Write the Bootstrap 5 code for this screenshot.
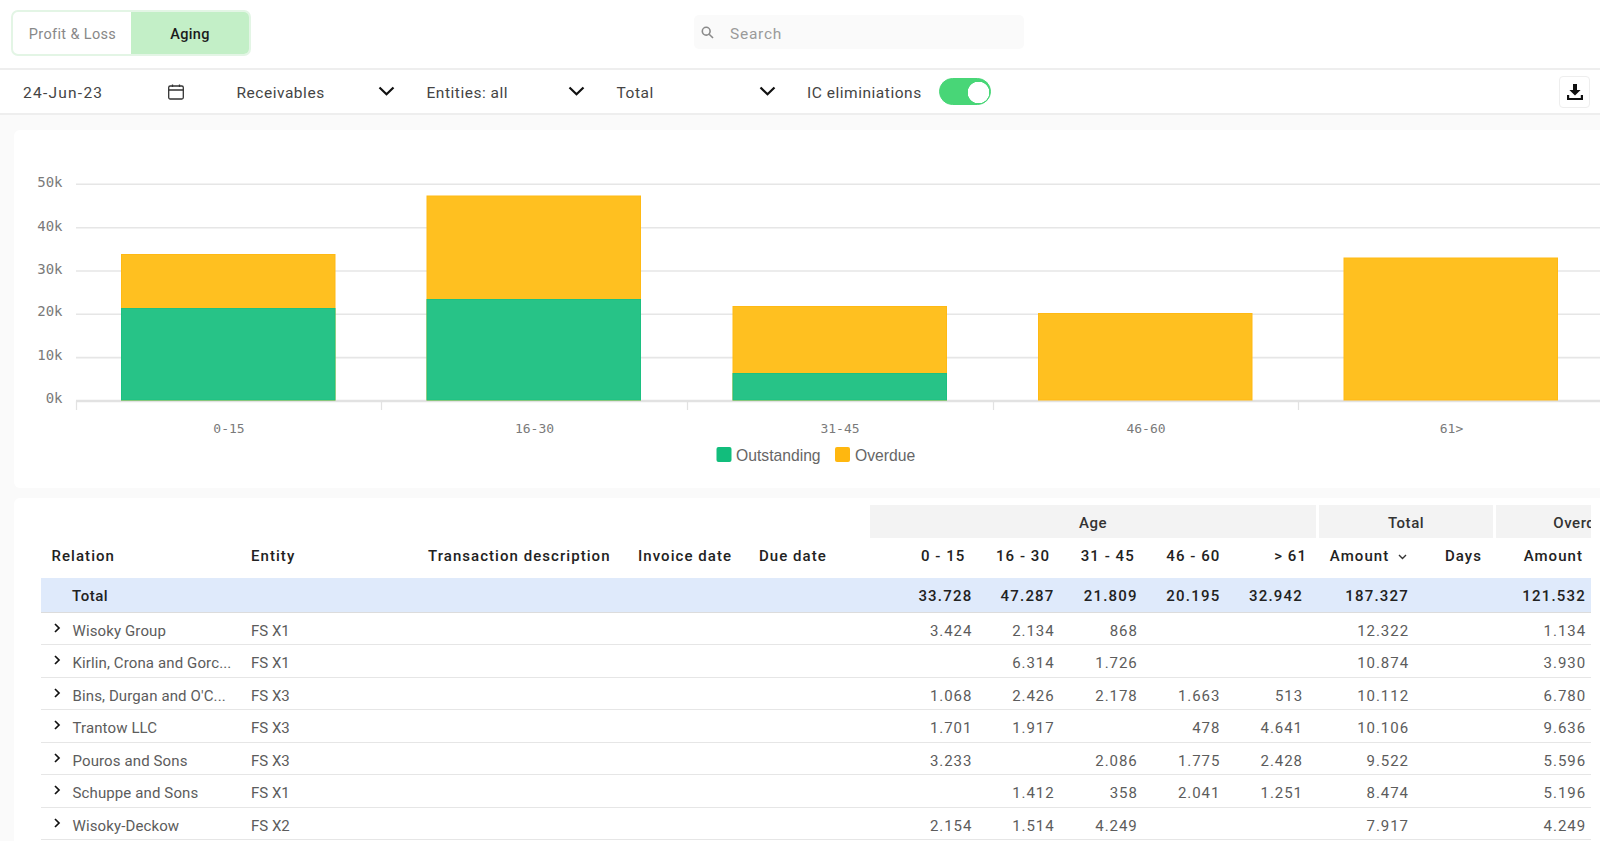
<!DOCTYPE html>
<html lang="en">
<head>
<meta charset="utf-8">
<title>Aging</title>
<link href="https://cdn.jsdelivr.net/npm/bootstrap@5.3.0/dist/css/bootstrap.min.css" rel="stylesheet">
<style>
html,body{height:841px;overflow:hidden}
body{background:#fafafa;font-family:Roboto,"Liberation Sans",sans-serif;font-size:15px;letter-spacing:.525px;color:#555}
.top-strip{height:70px;background:#fff;border-bottom:2px solid #eee;padding:10px 0 0 11px}
.seg-group{width:240px;height:46px;border:2px solid #e3f5e5;border-radius:7px;overflow:hidden}
.seg-group .seg-item{flex:1 1 0;border:0;border-radius:0;font-size:14.5px;letter-spacing:.36px;color:#888;padding:3px 0 0}
.seg-group .seg-first{flex:0 0 119px}
.seg-group .seg-on,.seg-group .seg-on:hover{background:#c3efc7;color:#1b1b1b;font-weight:500}
.search-box{margin-left:443px;margin-top:5px;width:330px;height:34px;background:#fafafa;border-radius:5px;padding-left:7px;gap:16px}
.search-box input{border:0;background:transparent;padding:6px 0 0;font-size:15.5px;letter-spacing:.75px;box-shadow:none;width:220px}
.search-box input::placeholder{color:#9a9a9a}
.filter-strip{height:45px;background:#fff;border-bottom:2px solid #eee;padding:0 10px 0 23px;color:#444;font-size:15.5px}
.filter-txt{padding-top:5px}
.filter-date .filter-txt{letter-spacing:1.25px}
.filter-item{height:100%}
.filter-date{width:213.5px;padding-right:52px}
.filter-sel{width:158.5px;margin-right:31.500px}
.filter-sel3{width:159px;margin-right:31.500px}
.chev-up{margin-top:-2px}
.sw-input.form-check-input{width:52px;height:27px;margin:0 0 0 17px;background-color:#48d677;border-color:#48d677;box-shadow:none;
 --bs-form-switch-bg:none;background-image:radial-gradient(circle at 38.5px 13.5px,#fff 10.5px,transparent 11px)}
.sw-wrap{padding:0;margin:0;min-height:0}
.dl-btn{width:31px;height:32px;padding:0;border:1px solid #eee;border-radius:4px;background:#fff}
.panel-chart{background:#fff;margin:15px 0 0 14px;height:358px;border-radius:6px 0 0 6px}
.panel-chart svg{display:block}
.panel-table{background:#fff;margin:10px 0 0 14px;height:343px;border-radius:6px 0 0 0;padding:7px 0 0 27px}
.tbl-clip{width:1550px;overflow:hidden}
.aging-tbl{table-layout:fixed;width:1631px;border-collapse:separate;border-spacing:0;margin:0;--bs-table-bg:transparent;color:#5c5c5c}
.aging-tbl th,.aging-tbl td{padding:0;border:0;box-shadow:none}
.aging-tbl .grp-row th{height:33px;vertical-align:middle;font-weight:500;color:#333;text-align:center;padding-top:3px}
.aging-tbl .grp-row th.grp-blank{padding:0}
.aging-tbl .grp-fill{background:#f3f3f3;border-left:1px solid #fff;border-right:2px solid #fff}
.aging-tbl .grp-age{border-left:0}
.aging-tbl .head-row th{height:40px;vertical-align:middle;font-weight:500;color:#222;padding-bottom:4px;white-space:nowrap;letter-spacing:1.05px}
.aging-tbl .total-row td{height:34.5px;background:#dfeafb;color:#222;font-weight:500;border-bottom:1.5px solid #dcdcdc;vertical-align:middle;padding-top:2px;letter-spacing:1.2px}
.aging-tbl .total-row td.pl-tot{letter-spacing:.525px}
.aging-tbl .data-row td{height:32.5px;border-bottom:1.5px solid #e6e6e6;vertical-align:middle;padding-top:5px;letter-spacing:.95px}
.aging-tbl .data-row td.pl-ent{letter-spacing:0}
.aging-tbl .data-row td.rel-cell{letter-spacing:.12px}
.pl-rel{padding-left:10.5px!important}
.pl-ent{padding-left:7px!important}
.pl-tot{padding-left:31px!important}
.pr-num{padding-right:13px!important;text-align:right}
.pr-last{padding-right:15px!important;text-align:right}
.ph1{padding-right:20px!important;text-align:right}
.ph2{padding-right:17.6px!important;text-align:right}
.ph3{padding-right:16px!important;text-align:right}
.ph4{padding-right:13px!important;text-align:right}
.ph5{padding-right:11px!important;text-align:right}
.ph6{padding-right:16px!important;text-align:right}
.rel-cell{padding-left:12.5px!important}
.rel-inner{gap:12px;width:191px}
.rel-name{display:block;white-space:nowrap}
.row-chev{flex:none;margin-top:-6px}
.chart-text-y{font-family:"DejaVu Sans Mono",monospace;font-size:14px;fill:#7a7a7a;letter-spacing:0}
.chart-text-x{font-family:"DejaVu Sans Mono",monospace;font-size:13px;fill:#7a7a7a;letter-spacing:0}
.chart-legend{font-family:"Liberation Sans",sans-serif;font-size:15.7px;fill:#666;letter-spacing:0}
</style>
</head>
<body>
<div class="top-strip d-flex align-items-start">
  <div class="seg-group btn-group d-flex" role="group">
    <button type="button" class="btn seg-item seg-first">Profit &amp; Loss</button>
    <button type="button" class="btn seg-item seg-on">Aging</button>
  </div>
  <div class="search-box d-flex align-items-center">
    <svg width="13" height="13" viewBox="0 0 13 13" fill="none" stroke="#8a8a8a" stroke-width="1.6"><circle cx="5.2" cy="5.2" r="3.9"/><path d="M8.2 8.2 12 12"/></svg>
    <input class="form-control" type="text" placeholder="Search">
  </div>
</div>

<div class="filter-strip d-flex align-items-center">
  <div class="filter-item filter-date d-flex align-items-center justify-content-between">
    <span class="filter-txt">24-Jun-23</span>
    <svg width="18" height="16" viewBox="0 0 18 16" fill="none" stroke="#333" stroke-width="1.3"><rect x="1.7" y="2" width="14.6" height="13" rx="1.5"/><path d="M1.7 6h14.6M5.5 .5v2.500M12.5 .5v2.500"/></svg>
  </div>
  <div class="filter-item filter-sel d-flex align-items-center justify-content-between">
    <span class="filter-txt">Receivables</span>
    <svg class="chev-up" width="17" height="10" viewBox="0 0 17 10" fill="none" stroke="#111" stroke-width="2.2"><path d="M1.5 1.5 8.5 8.3 15.5 1.5"/></svg>
  </div>
  <div class="filter-item filter-sel d-flex align-items-center justify-content-between">
    <span class="filter-txt">Entities: all</span>
    <svg class="chev-up" width="17" height="10" viewBox="0 0 17 10" fill="none" stroke="#111" stroke-width="2.2"><path d="M1.5 1.5 8.5 8.3 15.5 1.5"/></svg>
  </div>
  <div class="filter-item filter-sel3 d-flex align-items-center justify-content-between">
    <span class="filter-txt">Total</span>
    <svg class="chev-up" width="17" height="10" viewBox="0 0 17 10" fill="none" stroke="#111" stroke-width="2.2"><path d="M1.5 1.5 8.5 8.3 15.5 1.5"/></svg>
  </div>
  <span class="filter-txt">IC eliminiations</span>
  <div class="form-check form-switch sw-wrap">
    <input class="form-check-input sw-input" type="checkbox" role="switch" checked aria-label="IC eliminiations">
  </div>
  <button type="button" class="btn dl-btn ms-auto d-flex align-items-center justify-content-center" aria-label="Download">
    <svg width="18" height="18" viewBox="0 0 18 18" fill="#111"><path d="M7 1h4v6h3.6L9 12.6 3.4 7H7z"/><path d="M1 12h2.2v3h11.6v-3H17v5H1z"/></svg>
  </button>
</div>

<div class="panel-chart">
  <svg width="1586" height="358" viewBox="14 130 1586 358" role="img" aria-label="Aging chart">
    <g stroke="#e6e6e6" stroke-width="1.6">
      <path d="M76 184.3H1600M76 227.7H1600M76 271H1600M76 314.3H1600M76 357.6H1600"/>
    </g>
    <g stroke="#e2e2e2" stroke-width="2.4"><path d="M76 401H1600"/></g>
    <g stroke="#e2e2e2" stroke-width="1.2"><path d="M76.5 401V410M381.5 401V410M687.5 401V410M993.5 401V410M1298.5 401V410"/></g>
    <g fill="#ffc020" stroke="#ffb914" stroke-width="1">
      <rect x="121.5" y="254.5" width="213.5" height="145.500"/>
      <rect x="427" y="196" width="213.500" height="204"/>
      <rect x="733" y="306.500" width="213.500" height="93.500"/>
      <rect x="1038.500" y="313.500" width="213.500" height="86.500"/>
      <rect x="1344" y="258" width="213.500" height="142"/>
    </g>
    <g fill="#27c387" stroke="#1cc081" stroke-width="1">
      <rect x="121.5" y="308.500" width="213.500" height="91.500"/>
      <rect x="427" y="299.500" width="213.500" height="100.500"/>
      <rect x="733" y="373.500" width="213.500" height="26.500"/>
    </g>
    <g class="chart-text-y" text-anchor="end">
      <text x="62.5" y="187">50k</text><text x="62.5" y="230.500">40k</text><text x="62.500" y="273.500">30k</text>
      <text x="62.500" y="316">20k</text><text x="62.500" y="359.500">10k</text><text x="62.500" y="403">0k</text>
    </g>
    <g class="chart-text-x" text-anchor="middle">
      <text x="229" y="433">0-15</text><text x="534.500" y="433">16-30</text><text x="840" y="433">31-45</text>
      <text x="1146" y="433">46-60</text><text x="1451.500" y="433">61&gt;</text>
    </g>
    <rect x="716.500" y="447" width="15" height="15" rx="2" fill="#12bd7c"/>
    <text class="chart-legend" x="736" y="461">Outstanding</text>
    <rect x="835" y="447" width="15" height="15" rx="2" fill="#ffb70f"/>
    <text class="chart-legend" x="855" y="461">Overdue</text>
  </svg>
</div>

<div class="panel-table">
  <div class="tbl-clip">
    <table class="table aging-tbl">
      <colgroup>
        <col style="width:203px"><col style="width:177px"><col style="width:210px"><col style="width:121px"><col style="width:118px">
        <col style="width:115.4px"><col style="width:82.2px"><col style="width:83.2px"><col style="width:82.600px"><col style="width:84.600px">
        <col style="width:104px"><col style="width:73px"><col style="width:104px"><col style="width:73px">
      </colgroup>
      <thead>
        <tr class="grp-row">
          <th colspan="5" class="grp-blank"></th>
          <th colspan="5" class="grp-fill grp-age">Age</th>
          <th colspan="2" class="grp-fill">Total</th>
          <th colspan="2" class="grp-fill">Overdue</th>
        </tr>
        <tr class="head-row">
          <th class="pl-rel">Relation</th>
          <th class="pl-ent">Entity</th>
          <th class="pl-ent">Transaction description</th>
          <th class="pl-ent">Invoice date</th>
          <th class="pl-ent">Due date</th>
          <th class="ph1">0 - 15</th>
          <th class="ph2">16 - 30</th>
          <th class="ph3">31 - 45</th>
          <th class="ph4">46 - 60</th>
          <th class="ph5">&gt; 61</th>
          <th class="pr-last">Amount <svg class="ms-1" width="9" height="6" viewBox="0 0 9 6" fill="none" stroke="#333" stroke-width="1.4"><path d="M1 1l3.500 3.500L8 1"/></svg></th>
          <th class="pr-num">Days</th>
          <th class="ph6">Amount</th>
          <th></th>
        </tr>
      </thead>
      <tbody>
        <tr class="total-row"><td class="pl-tot">Total</td><td></td><td></td><td></td><td></td>
          <td class="pr-num">33.728</td><td class="pr-num">47.287</td><td class="pr-num">21.809</td><td class="pr-num">20.195</td><td class="pr-last">32.942</td><td class="pr-num">187.327</td><td></td><td class="pr-num">121.532</td><td></td></tr>
        <tr class="data-row"><td class="rel-cell"><div class="rel-inner d-flex align-items-center"><svg class="row-chev" width="7" height="10" viewBox="0 0 7 10" fill="none" stroke="#111" stroke-width="1.700"><path d="M1 1l4 4-4 4"/></svg><span class="rel-name">Wisoky Group</span></div></td><td class="pl-ent">FS X1</td><td></td><td></td><td></td>
          <td class="pr-num">3.424</td><td class="pr-num">2.134</td><td class="pr-num">868</td><td class="pr-num"></td><td class="pr-last"></td><td class="pr-num">12.322</td><td></td><td class="pr-num">1.134</td><td></td></tr>
        <tr class="data-row"><td class="rel-cell"><div class="rel-inner d-flex align-items-center"><svg class="row-chev" width="7" height="10" viewBox="0 0 7 10" fill="none" stroke="#111" stroke-width="1.700"><path d="M1 1l4 4-4 4"/></svg><span class="rel-name">Kirlin, Crona and Gorc...</span></div></td><td class="pl-ent">FS X1</td><td></td><td></td><td></td>
          <td class="pr-num"></td><td class="pr-num">6.314</td><td class="pr-num">1.726</td><td class="pr-num"></td><td class="pr-last"></td><td class="pr-num">10.874</td><td></td><td class="pr-num">3.930</td><td></td></tr>
        <tr class="data-row"><td class="rel-cell"><div class="rel-inner d-flex align-items-center"><svg class="row-chev" width="7" height="10" viewBox="0 0 7 10" fill="none" stroke="#111" stroke-width="1.700"><path d="M1 1l4 4-4 4"/></svg><span class="rel-name">Bins, Durgan and O'C...</span></div></td><td class="pl-ent">FS X3</td><td></td><td></td><td></td>
          <td class="pr-num">1.068</td><td class="pr-num">2.426</td><td class="pr-num">2.178</td><td class="pr-num">1.663</td><td class="pr-last">513</td><td class="pr-num">10.112</td><td></td><td class="pr-num">6.780</td><td></td></tr>
        <tr class="data-row"><td class="rel-cell"><div class="rel-inner d-flex align-items-center"><svg class="row-chev" width="7" height="10" viewBox="0 0 7 10" fill="none" stroke="#111" stroke-width="1.700"><path d="M1 1l4 4-4 4"/></svg><span class="rel-name">Trantow LLC</span></div></td><td class="pl-ent">FS X3</td><td></td><td></td><td></td>
          <td class="pr-num">1.701</td><td class="pr-num">1.917</td><td class="pr-num"></td><td class="pr-num">478</td><td class="pr-last">4.641</td><td class="pr-num">10.106</td><td></td><td class="pr-num">9.636</td><td></td></tr>
        <tr class="data-row"><td class="rel-cell"><div class="rel-inner d-flex align-items-center"><svg class="row-chev" width="7" height="10" viewBox="0 0 7 10" fill="none" stroke="#111" stroke-width="1.700"><path d="M1 1l4 4-4 4"/></svg><span class="rel-name">Pouros and Sons</span></div></td><td class="pl-ent">FS X3</td><td></td><td></td><td></td>
          <td class="pr-num">3.233</td><td class="pr-num"></td><td class="pr-num">2.086</td><td class="pr-num">1.775</td><td class="pr-last">2.428</td><td class="pr-num">9.522</td><td></td><td class="pr-num">5.596</td><td></td></tr>
        <tr class="data-row"><td class="rel-cell"><div class="rel-inner d-flex align-items-center"><svg class="row-chev" width="7" height="10" viewBox="0 0 7 10" fill="none" stroke="#111" stroke-width="1.700"><path d="M1 1l4 4-4 4"/></svg><span class="rel-name">Schuppe and Sons</span></div></td><td class="pl-ent">FS X1</td><td></td><td></td><td></td>
          <td class="pr-num"></td><td class="pr-num">1.412</td><td class="pr-num">358</td><td class="pr-num">2.041</td><td class="pr-last">1.251</td><td class="pr-num">8.474</td><td></td><td class="pr-num">5.196</td><td></td></tr>
        <tr class="data-row"><td class="rel-cell"><div class="rel-inner d-flex align-items-center"><svg class="row-chev" width="7" height="10" viewBox="0 0 7 10" fill="none" stroke="#111" stroke-width="1.700"><path d="M1 1l4 4-4 4"/></svg><span class="rel-name">Wisoky-Deckow</span></div></td><td class="pl-ent">FS X2</td><td></td><td></td><td></td>
          <td class="pr-num">2.154</td><td class="pr-num">1.514</td><td class="pr-num">4.249</td><td class="pr-num"></td><td class="pr-last"></td><td class="pr-num">7.917</td><td></td><td class="pr-num">4.249</td><td></td></tr>
      </tbody>
    </table>
  </div>
</div>
<script src="https://cdn.jsdelivr.net/npm/bootstrap@5.3.0/dist/js/bootstrap.bundle.min.js"></script>
</body>
</html>
